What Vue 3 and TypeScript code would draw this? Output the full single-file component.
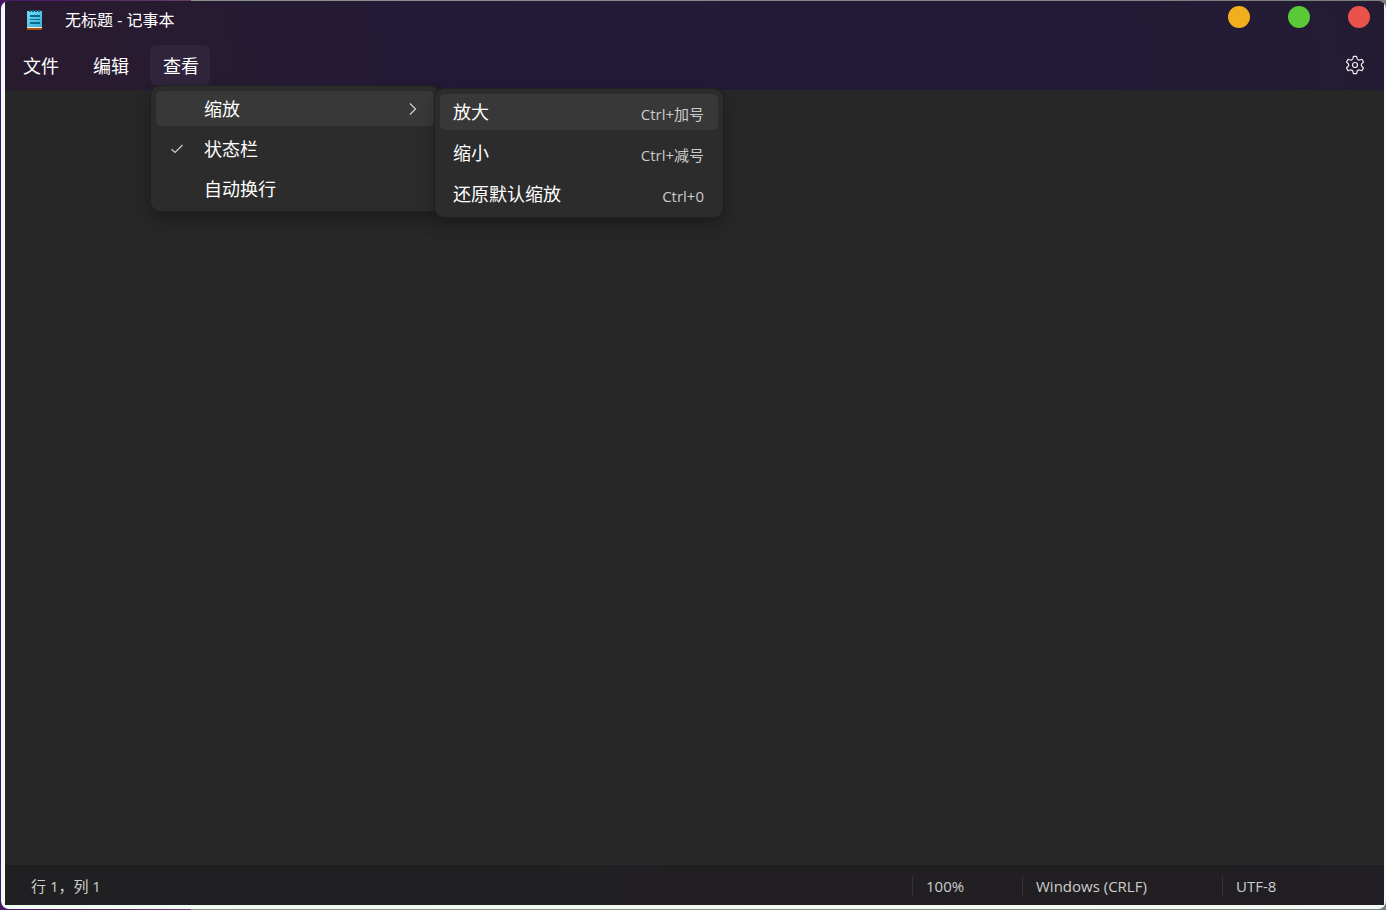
<script setup lang="ts">
import { ref } from 'vue'

interface ViewItem {
  label: string
  checked?: boolean
  submenu?: boolean
}

interface ZoomItem {
  label: string
  shortcut: string
}

const menus: string[] = ['文件', '编辑', '查看']
const openMenu = '查看'

const viewItems: ViewItem[] = [
  { label: '缩放', submenu: true },
  { label: '状态栏', checked: true },
  { label: '自动换行' },
]

const zoomItems: ZoomItem[] = [
  { label: '放大', shortcut: 'Ctrl+加号' },
  { label: '缩小', shortcut: 'Ctrl+减号' },
  { label: '还原默认缩放', shortcut: 'Ctrl+0' },
]

const windowButtons = [
  { name: 'minimize', label: '最小化' },
  { name: 'maximize', label: '最大化' },
  { name: 'close', label: '关闭' },
]

const content = ref('')
</script>

<template>
  <div class="desktop">
    <div class="frame">
      <div class="window">
        <header class="header">
          <div class="titlebar">
            <svg class="app-icon" width="16" height="20" viewBox="0 0 16 20" aria-hidden="true">
              <defs>
                <linearGradient id="pad" x1="0" y1="0" x2="1" y2="1">
                  <stop offset="0" stop-color="#72dcf2" />
                  <stop offset="1" stop-color="#3db0d8" />
                </linearGradient>
              </defs>
              <path d="M0 17h15v2a1 1 0 0 1-1 1H1a1 1 0 0 1-1-1z" fill="#a9500f" />
              <path d="M0 17h15v1H0z" fill="#f0ece8" />
              <path d="M0 1h15v16H0z" fill="url(#pad)" />
              <path d="M2 0h2v2H2zM5 0h2v2H5zM8 0h2v2H8zM11 0h2v2h-2z" fill="#17657f" />
              <path d="M3 5h10v2H3zM3 9h10v1H3zM3 12h10v2H3z" fill="#086a8c" />
            </svg>
            <h1 class="title">无标题 - 记事本</h1>
            <div class="window-buttons">
              <button
                v-for="b in windowButtons"
                :key="b.name"
                type="button"
                class="dot"
                :class="b.name"
                :aria-label="b.label"
              ></button>
            </div>
          </div>
          <nav class="menubar">
            <div v-for="m in menus" :key="m" class="menu-root">
              <button type="button" class="menu-button" :class="{ open: m === openMenu }">{{ m }}</button>
              <div v-if="m === openMenu" class="popup view-menu">
                <button
                  v-for="item in viewItems"
                  :key="item.label"
                  type="button"
                  class="item view-item"
                  :class="{ active: item.submenu }"
                >
                  <span class="mark">
                    <svg v-if="item.checked" width="14" height="12" viewBox="0 0 14 12" aria-hidden="true">
                      <path d="M1.5 6.2 5 9.5 12.5 2" fill="none" stroke="#cfcfcf" stroke-width="1.2" />
                    </svg>
                  </span>
                  <span class="label">{{ item.label }}</span>
                  <svg v-if="item.submenu" width="10" height="14" viewBox="0 0 10 14" aria-hidden="true">
                    <path d="M2 1.5 7.5 7 2 12.5" fill="none" stroke="#cfcfcf" stroke-width="1.2" />
                  </svg>
                </button>
                <div class="popup zoom-menu">
                  <button
                    v-for="(item, i) in zoomItems"
                    :key="item.label"
                    type="button"
                    class="item zoom-item"
                    :class="{ active: i === 0 }"
                  >
                    <span class="label">{{ item.label }}</span>
                    <span class="shortcut">{{ item.shortcut }}</span>
                  </button>
                </div>
              </div>
            </div>
            <button type="button" class="settings" aria-label="设置">
              <svg width="20" height="20" viewBox="0 0 20 20" aria-hidden="true">
                <g fill="none" stroke="#ececf0" stroke-width="1.2" stroke-linejoin="round">
                  <path
                    d="M8.4 1.4h3.2l.5 2.3q.2.7.9.9l.5.3q.6.3 1.2.1l2.2-.7 1.6 2.8-1.7 1.6q-.5.5-.5 1.3t.5 1.3l1.7 1.6-1.6 2.8-2.2-.7q-.6-.2-1.2.1l-.5.3q-.7.2-.9.9l-.5 2.3H8.4l-.5-2.3q-.2-.7-.9-.9l-.5-.3q-.6-.3-1.2-.1l-2.2.7-1.6-2.8 1.7-1.6q.5-.5.5-1.3t-.5-1.3L1.5 7.1l1.6-2.8 2.2.7q.6.2 1.2-.1l.5-.3q.7-.2.9-.9z"
                  />
                  <circle cx="10" cy="10" r="2.5" />
                </g>
              </svg>
            </button>
          </nav>
        </header>
        <textarea v-model="content" class="editor" aria-label="文本编辑器" spellcheck="false"></textarea>
        <footer class="statusbar">
          <span class="cell position">行 1，列 1</span>
          <span class="cell zoom">100%</span>
          <span class="cell eol">Windows (CRLF)</span>
          <span class="cell encoding">UTF-8</span>
        </footer>
      </div>
    </div>
  </div>
</template>

<style>
body {
  margin: 0;
}
</style>

<style scoped>
.desktop {
  box-sizing: border-box;
  display: flex;
  height: 100vh;
  padding: 1px 0 1px 1px;
  background: linear-gradient(90deg, #45156a 0, #6a3a68 191px, #8d928c 191px, #7c807c 100%);
  font-family: 'Open Sans', 'Noto Sans CJK SC', sans-serif;
}

.frame {
  box-sizing: border-box;
  display: flex;
  flex: 1;
  min-width: 0;
  padding: 0 2px 4px 4px;
  border-radius: 8px;
  background: #f0fcf3;
  overflow: hidden;
}

.window {
  display: flex;
  flex: 1;
  flex-direction: column;
  min-width: 0;
  background: #272727;
}

button {
  margin: 0;
  padding: 0;
  border: 0;
  background: none;
  color: inherit;
  font: inherit;
}

.header {
  position: relative;
  z-index: 1;
  background: linear-gradient(80deg, #291b2e 0, #271b31 12%, #231a38 32%, #231a38 75%, #241b33 100%);
  color: #fff;
}

.titlebar {
  display: flex;
  align-items: flex-start;
  height: 44px;
  padding: 0 14px 0 22px;
}

.app-icon {
  margin-top: 9px;
}

.title {
  flex: 1;
  margin: 8px 0 0 22px;
  font-size: 16px;
  font-weight: 400;
  line-height: 22px;
}

.window-buttons {
  display: flex;
  gap: 38px;
  padding-top: 5px;
}

.dot {
  width: 22px;
  height: 22px;
  border-radius: 50%;
}

.minimize {
  background: #f1af1d;
}

.maximize {
  background: #5bc837;
}

.close {
  background: #ea534b;
}

.menubar {
  display: flex;
  gap: 10px;
  padding: 0 15px 5px 5px;
}

.menu-root {
  position: relative;
}

.menu-button {
  width: 60px;
  height: 40px;
  padding: 2px 0 0 2px;
  border-radius: 6px;
  font-size: 18px;
  line-height: 24px;
}

.menu-button.open {
  background: #30233c;
}

.settings {
  display: flex;
  align-items: center;
  height: 40px;
  margin-left: auto;
  padding: 0 4px;
}

.popup {
  position: absolute;
  box-sizing: border-box;
  display: flex;
  flex-direction: column;
  gap: 5px;
  padding: 5px;
  border-radius: 9px;
  background: #2c2c2c;
  box-shadow: 0 0 0 1px #202020, 0 8px 16px rgba(0, 0, 0, 0.28);
}

.view-menu {
  top: 41px;
  left: 1px;
  width: 288px;
}

.zoom-menu {
  top: 3px;
  left: 284px;
  width: 288px;
}

.item {
  display: flex;
  align-items: center;
  border-radius: 5px;
  font-size: 18px;
  line-height: 24px;
  text-align: left;
}

.item.active {
  background: #383838;
}

.view-item {
  height: 35px;
  padding: 0 16px 0 14px;
}

.zoom-item {
  height: 36px;
  padding: 0 14px 0 13px;
}

.mark {
  display: flex;
  width: 34px;
}

.label {
  flex: 1;
}

.shortcut {
  padding-top: 4px;
  color: #cbcbcb;
  font-size: 15px;
  line-height: 20px;
}

.editor {
  flex: 1;
  min-height: 0;
  padding: 8px 12px;
  border: 0;
  outline: 0;
  resize: none;
  background: #272727;
  color: #fff;
  font: inherit;
  font-size: 18px;
}

.statusbar {
  display: flex;
  align-items: center;
  height: 40px;
  border-top: 1px solid #1f1e20;
  box-sizing: border-box;
  background: linear-gradient(90deg, #202022 0, #202022 40%, #221f23 48%, #221f22 85%, #211e25);
  color: #cdcdcd;
  font-size: 15px;
  line-height: 20px;
}

.cell {
  box-sizing: border-box;
  padding-left: 13px;
  border-left: 1px solid #353336;
}

.position {
  flex: 1;
  padding-left: 26px;
  border-left: 0;
}

.zoom {
  width: 110px;
}

.eol {
  width: 200px;
}

.encoding {
  width: 162px;
}
</style>
